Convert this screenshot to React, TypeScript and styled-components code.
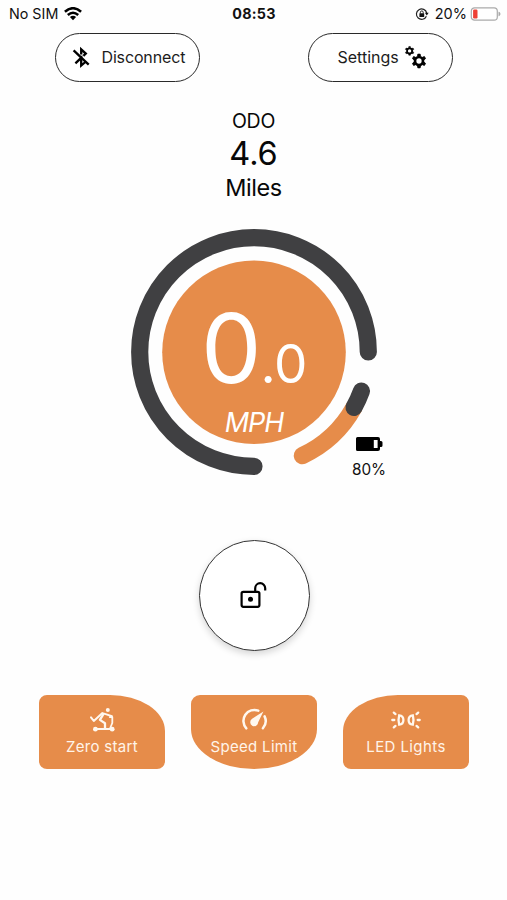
import React from "react";
import styled, { createGlobalStyle } from "styled-components";

const ORANGE = "#e68c4a";
const DARK = "#404042";

const GlobalStyle = createGlobalStyle`
  * { box-sizing: border-box; }
  body { margin: 0; background: #fefefe; font-family: Inter, "Liberation Sans", sans-serif; color: #111; }
`;

const Screen = styled.main`
  width: 507px;
  height: 900px;
  display: flex;
  flex-direction: column;
  align-items: center;
  overflow: hidden;
`;

const StatusBar = styled.header`
  width: 100%;
  height: 33px;
  flex: none;
  display: grid;
  grid-template-columns: 1fr auto 1fr;
  padding: 4px 6px 9px 9px;
  line-height: 20px;
  font-size: 14.3px;
`;

const StatusGroup = styled.div<{ $end?: boolean; $gap: number }>`
  display: flex;
  align-items: center;
  justify-content: ${(p) => (p.$end ? "flex-end" : "flex-start")};
  gap: ${(p) => p.$gap}px;
`;

const Percent = styled.span`
  font-size: 14.5px;
  margin-left: 3px;
`;

const Clock = styled.div`
  font-weight: 700;
  letter-spacing: 0.3px;
  margin-right: 2px;
`;

const Actions = styled.nav`
  width: 398px;
  flex: none;
  display: flex;
  justify-content: space-between;
`;

const PillButton = styled.button<{ $gap: number; $pad: string }>`
  width: 145px;
  height: 49px;
  display: flex;
  align-items: center;
  gap: ${(p) => p.$gap}px;
  padding: ${(p) => p.$pad};
  border: 1.5px solid #2a2a2a;
  border-radius: 25px;
  background: #fff;
  color: #1c1c1c;
  font: 400 16px/20px Inter, sans-serif;
  white-space: nowrap;
`;

const Label = styled.span<{ $spacing: number }>`
  letter-spacing: ${(p) => p.$spacing}px;
`;

const Odometer = styled.section`
  display: flex;
  flex-direction: column;
  align-items: center;
  margin-top: 27px;
  height: 102px;
  flex: none;
`;

const OdoLine = styled.div<{ $size: number; $line: number; $spacing: number }>`
  font-size: ${(p) => p.$size}px;
  line-height: ${(p) => p.$line}px;
  letter-spacing: ${(p) => p.$spacing}px;
  color: #080808;
`;

const Gauge = styled.section`
  position: relative;
  width: 280px;
  height: 280px;
  flex: none;
  margin-left: 1px;
  margin-top: 1px;
`;

const Ring = styled.svg`
  display: block;
`;

const Readout = styled.div`
  position: absolute;
  inset: 48px;
  color: #fff;
  text-align: center;
`;

const Speed = styled.div`
  display: flex;
  justify-content: center;
  align-items: baseline;
  margin-top: 33px;
  height: 114px;
  line-height: 110px;
  font-weight: 400;
`;

const Whole = styled.span`
  font-size: 96px;
  letter-spacing: -1px;
`;

const Fraction = styled.span`
  font-size: 53px;
  letter-spacing: -0.5px;
`;

const Unit = styled.div`
  font-size: 27px;
  line-height: 32px;
  font-style: italic;
  font-weight: 400;
  letter-spacing: -1.1px;
`;

const BatteryStatus = styled.div`
  position: absolute;
  left: 232px;
  top: 225px;
  width: 46px;
  display: flex;
  flex-direction: column;
  align-items: center;
  gap: 10px;
  font-size: 15.3px;
  line-height: 18px;
`;

const LockButton = styled.button`
  width: 111px;
  height: 111px;
  flex: none;
  margin-top: 48px;
  margin-left: 1px;
  padding: 0 1px 2px 0;
  border: 1.5px solid #333;
  border-radius: 50%;
  background: #fff;
  box-shadow: 0 3px 7px rgba(0, 0, 0, 0.16);
  display: flex;
  align-items: center;
  justify-content: center;
`;

const Modes = styled.section`
  display: flex;
  gap: 26px;
  margin-top: 44px;
  margin-left: 1px;
`;

const ModeButton = styled.button<{ $radius: string }>`
  width: 126px;
  height: 74px;
  padding: 12px 0 0;
  border: 0;
  border-radius: ${(p) => p.$radius};
  background: ${ORANGE};
  color: #fff4e9;
  display: flex;
  flex-direction: column;
  align-items: center;
  font: 400 15px/20px Inter, sans-serif;
  gap: 4px;
  white-space: nowrap;
`;

function Wifi() {
  return (
    <svg width="18" height="14" viewBox="0 0 18 14" fill="none" stroke="#000" strokeWidth="2.5">
      <path d="M.9 4.8Q9-2.4 17.1 4.8" />
      <path d="M3.8 8Q9 3.4 14.2 8" />
      <path d="M9 13.2 5.9 10.1Q9 7.6 12.1 10.1Z" fill="#000" stroke="none" />
    </svg>
  );
}

function RotationLock() {
  return (
    <svg width="14" height="14" viewBox="0 0 14 14" fill="none" stroke="#222" strokeWidth="1.2">
      <path d="M11.4 9.2A5.2 5.2 0 1 1 11.7 6" />
      <path d="M9.9 5.7H13.7L11.8 8.4Z" fill="#111" stroke="none" />
      <rect x="4.4" y="6.3" width="4.8" height="3.6" rx=".5" fill="#111" stroke="none" />
      <path d="M5.4 6.6V5.3A1.4 1.4 0 0 1 8.2 5.3V6.6" strokeWidth="1" />
    </svg>
  );
}

function PhoneBattery() {
  return (
    <svg width="31" height="14" viewBox="0 0 31 14">
      <rect x="1.3" y=".8" width="26" height="12.4" rx="3.2" fill="#fff" stroke="#aaa" strokeWidth="1.2" />
      <rect x="3.1" y="2.6" width="4.4" height="8.8" rx="1.2" fill="#ee4035" />
      <path d="M28.5 4.8C31.1 5.3 31.1 8.7 28.5 9.2Z" fill="#aaa" />
    </svg>
  );
}

function BluetoothOff() {
  return (
    <svg width="23" height="23" viewBox="0 0 23 23" fill="none" stroke="#000" strokeWidth="2.3">
      <path d="M3.6 4.3 18.7 18.6" />
      <path d="M11.2 8.4V3.4L15.8 7.6 13.4 9.9" />
      <path d="M5.4 17.4 11.2 11.8V19.6L15.4 16" />
    </svg>
  );
}

function Cog({ x, y, size }: { x: number; y: number; size: number }) {
  return (
    <g transform={`translate(${x} ${y}) scale(${size})`} stroke="#000" fill="none">
      <circle r="4" strokeWidth="2.7" />
      {[0, 60, 120, 180, 240, 300].map((angle) => (
        <path key={angle} d="M-1.5 -5 -1.2 -6.9H1.2L1.5 -5Z" fill="#000" strokeWidth=".7" transform={`rotate(${angle})`} />
      ))}
    </g>
  );
}

function Scooter() {
  return (
    <svg width="27" height="26" viewBox="0 0 27 26" fill="none" stroke="#fff8ef" strokeWidth="2" strokeLinecap="round" strokeLinejoin="round">
      <circle cx="18.8" cy="3" r="2" fill="#fff8ef" stroke="none" />
      <path d="M2 10.3 4.8 14 13.4 6.1 18.2 7.6 22.9 9.2" />
      <path d="M14.4 7.2 10.9 12.9 16 16.2V21" strokeWidth="2.3" />
      <path d="M20.8 10.1H23.3V16L20.8 22" strokeWidth="1.8" />
      <path d="M7 22H23" strokeWidth="2.2" />
      <circle cx="6.4" cy="22.2" r="2.4" fill="#fff8ef" stroke="none" />
      <circle cx="23.2" cy="22.2" r="2.4" fill="#fff8ef" stroke="none" />
    </svg>
  );
}

function Speedometer() {
  return (
    <svg width="27" height="26" viewBox="0 0 27 26" fill="none" stroke="#fff8ef" strokeWidth="2.5" strokeLinecap="round">
      <path d="M5.3 21.3A11 11 0 0 1 17.3 3.6" />
      <path d="M23.6 9.4A11 11 0 0 1 21.9 21.3" />
      <path d="M22.4 4.4 17.2 15.3A4 4 0 1 1 11.1 11.8Z" fill="#fff8ef" stroke="none" />
    </svg>
  );
}

function Lights() {
  return (
    <svg width="32" height="26" viewBox="0 0 32 26" fill="none" stroke="#fff8ef" strokeWidth="2.3" strokeLinecap="round">
      <path d="M9.2 8.3C14.8 8.7 14.8 17.3 9.2 17.7Q7.8 13 9.2 8.3Z" />
      <path d="M22.8 8.3C17.2 8.7 17.2 17.3 22.8 17.7Q24.2 13 22.8 8.3Z" />
      <path d="M2.3 13H4.3M3.8 5.6 5.5 7.1M3.8 20.4 5.5 18.9M29.7 13H27.7M28.2 5.6 26.5 7.1M28.2 20.4 26.5 18.9" />
    </svg>
  );
}

export default function App() {
  return (
    <Screen>
      <GlobalStyle />
      <StatusBar>
        <StatusGroup $gap={6}><span>No SIM</span><Wifi /></StatusGroup>
        <Clock>08:53</Clock>
        <StatusGroup $end $gap={3}>
          <RotationLock /><Percent>20%</Percent><PhoneBattery />
        </StatusGroup>
      </StatusBar>
      <Actions>
        <PillButton $gap={9} $pad="0 0 1px 14px">
          <BluetoothOff />
          <Label $spacing={-0.15}>Disconnect</Label>
        </PillButton>
        <PillButton $gap={5} $pad="0 0 1px 29px">
          <Label $spacing={0}>Settings</Label>
          <svg width="24" height="24" viewBox="0 0 24 24">
            <Cog x={5.6} y={5.9} size={0.64} />
            <Cog x={15} y={16} size={1} />
          </svg>
        </PillButton>
      </Actions>
      <Odometer>
        <OdoLine $size={19.5} $line={25} $spacing={-0.3}>ODO</OdoLine>
        <OdoLine $size={32.5} $line={40} $spacing={-0.1}>4.6</OdoLine>
        <OdoLine $size={23.5} $line={28} $spacing={-0.4}>Miles</OdoLine>
      </Odometer>
      <Gauge>
        <Ring width="280" height="280" viewBox="-140 -140 280 280" fill="none" strokeWidth="17.2" strokeLinecap="round">
          <path d="M0 114.3A114.3 114.3 0 1 1 114.3 0" stroke={DARK} />
          <path d="M48.3 103.6A114.3 114.3 0 0 0 100 55.4" stroke={ORANGE} />
          <path d="M100 55.4A114.3 114.3 0 0 0 107.4 39.1" stroke={DARK} />
          <circle r="91.8" cy=".3" fill={ORANGE} />
        </Ring>
        <Readout>
          <Speed><Whole>0</Whole><Fraction>.0</Fraction></Speed>
          <Unit>MPH</Unit>
        </Readout>
        <BatteryStatus>
          <svg width="27" height="14" viewBox="0 0 27 14">
            <path d="M1.5 0H22Q24 0 24 2V4H25Q26.5 4 26.5 5.5V8.5Q26.5 10 25 10H24V12Q24 14 22 14H1.5Q0 14 0 12.5V1.5Q0 0 1.5 0Z" fill="#000" />
            <rect x="17.8" y="3" width="3.8" height="8" fill="#fff" />
          </svg>
          <span>80%</span>
        </BatteryStatus>
      </Gauge>
      <LockButton aria-label="Unlock">
        <svg width="27" height="28" viewBox="0 0 27 28" fill="none" stroke="#000" strokeWidth="2.2">
          <rect x="1.6" y="10.8" width="17.8" height="15" rx="1.7" />
          <path d="M15.2 10.5V7.2A5 5 0 0 1 25.2 7.2V9.5" />
          <circle cx="10.5" cy="18.3" r="2.5" fill="#000" stroke="none" />
        </svg>
      </LockButton>
      <Modes>
        <ModeButton $radius="8px 55px 8px 8px / 8px 36px 8px 8px">
          <Scooter /><Label $spacing={0.3}>Zero start</Label>
        </ModeButton>
        <ModeButton $radius="9px 9px 63px 63px / 9px 9px 40px 40px">
          <Speedometer /><Label $spacing={0.3}>Speed Limit</Label>
        </ModeButton>
        <ModeButton $radius="55px 8px 8px 8px / 36px 8px 8px 8px">
          <Lights /><Label $spacing={0.4}>LED Lights</Label>
        </ModeButton>
      </Modes>
    </Screen>
  );
}
